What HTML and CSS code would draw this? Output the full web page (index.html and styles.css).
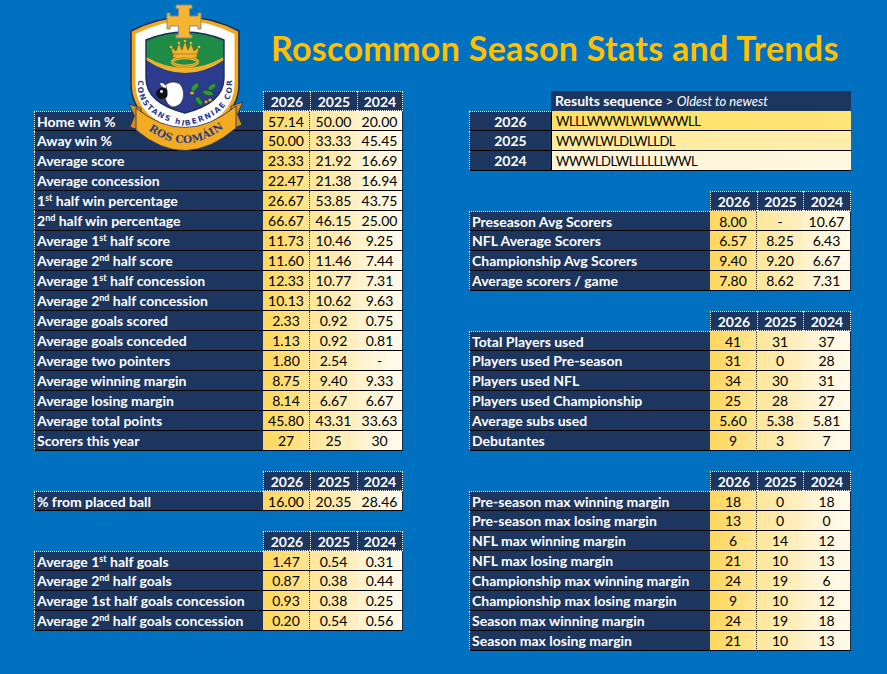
FILE: index.html
```html
<!DOCTYPE html>
<html lang="en">
<head>
<meta charset="utf-8">
<title>Roscommon Season Stats and Trends</title>
<link rel="stylesheet" href="styles.css">
</head>
<body>
<div class="sheet">
  <header class="title-bar">
    <h1>Roscommon Season Stats and Trends</h1>
  </header>

  <main class="columns">
    <section class="col">
      <div class="tbl stats-l">
        <div class="blank"></div><div class="hd">2026</div><div class="hd">2025</div><div class="hd last">2024</div>
        <div class="lab top">Home win %</div><div class="v v1 top">57.14</div><div class="v v2 top">50.00</div><div class="v v3 top">20.00</div>
        <div class="lab">Away win %</div><div class="v v1">50.00</div><div class="v v2">33.33</div><div class="v v3">45.45</div>
        <div class="lab">Average score</div><div class="v v1">23.33</div><div class="v v2">21.92</div><div class="v v3">16.69</div>
        <div class="lab">Average concession</div><div class="v v1">22.47</div><div class="v v2">21.38</div><div class="v v3">16.94</div>
        <div class="lab">1<sup>st</sup> half win percentage</div><div class="v v1">26.67</div><div class="v v2">53.85</div><div class="v v3">43.75</div>
        <div class="lab">2<sup>nd</sup> half win percentage</div><div class="v v1">66.67</div><div class="v v2">46.15</div><div class="v v3">25.00</div>
        <div class="lab">Average 1<sup>st</sup> half score</div><div class="v v1">11.73</div><div class="v v2">10.46</div><div class="v v3">9.25</div>
        <div class="lab">Average 2<sup>nd</sup> half score</div><div class="v v1">11.60</div><div class="v v2">11.46</div><div class="v v3">7.44</div>
        <div class="lab">Average 1<sup>st</sup> half concession</div><div class="v v1">12.33</div><div class="v v2">10.77</div><div class="v v3">7.31</div>
        <div class="lab">Average 2<sup>nd</sup> half concession</div><div class="v v1">10.13</div><div class="v v2">10.62</div><div class="v v3">9.63</div>
        <div class="lab">Average goals scored</div><div class="v v1">2.33</div><div class="v v2">0.92</div><div class="v v3">0.75</div>
        <div class="lab">Average goals conceded</div><div class="v v1">1.13</div><div class="v v2">0.92</div><div class="v v3">0.81</div>
        <div class="lab">Average two pointers</div><div class="v v1">1.80</div><div class="v v2">2.54</div><div class="v v3">-</div>
        <div class="lab">Average winning margin</div><div class="v v1">8.75</div><div class="v v2">9.40</div><div class="v v3">9.33</div>
        <div class="lab">Average losing margin</div><div class="v v1">8.14</div><div class="v v2">6.67</div><div class="v v3">6.67</div>
        <div class="lab">Average total points</div><div class="v v1">45.80</div><div class="v v2">43.31</div><div class="v v3">33.63</div>
        <div class="lab">Scorers this year</div><div class="v v1">27</div><div class="v v2">25</div><div class="v v3">30</div>
      </div>

      <div class="tbl stats-l">
        <div class="blank"></div><div class="hd">2026</div><div class="hd">2025</div><div class="hd last">2024</div>
        <div class="lab top">% from placed ball</div><div class="v v1 top">16.00</div><div class="v v2 top">20.35</div><div class="v v3 top">28.46</div>
      </div>

      <div class="tbl stats-l">
        <div class="blank"></div><div class="hd">2026</div><div class="hd">2025</div><div class="hd last">2024</div>
        <div class="lab top">Average 1<sup>st</sup> half goals</div><div class="v v1 top">1.47</div><div class="v v2 top">0.54</div><div class="v v3 top">0.31</div>
        <div class="lab">Average 2<sup>nd</sup> half goals</div><div class="v v1">0.87</div><div class="v v2">0.38</div><div class="v v3">0.44</div>
        <div class="lab">Average 1st half goals concession</div><div class="v v1">0.93</div><div class="v v2">0.38</div><div class="v v3">0.25</div>
        <div class="lab">Average 2<sup>nd</sup> half goals concession</div><div class="v v1">0.20</div><div class="v v2">0.54</div><div class="v v3">0.56</div>
      </div>
    </section>

    <section class="col">
      <div class="tbl seq">
        <div class="blank"></div><div class="seq-hd"><b>Results sequence</b> <span class="sub">&gt; <i>Oldest to newest</i></span></div>
        <div class="yr top">2026</div><div class="s s1">WLLLWWWLWLWWWLL</div>
        <div class="yr">2025</div><div class="s s2">WWWLWLDLWLLDL</div>
        <div class="yr">2024</div><div class="s s3">WWWLDLWLLLLLLWWL</div>
      </div>

      <div class="tbl stats-r">
        <div class="blank"></div><div class="hd">2026</div><div class="hd">2025</div><div class="hd last">2024</div>
        <div class="lab top">Preseason Avg Scorers</div><div class="v v1 top">8.00</div><div class="v v2 top">-</div><div class="v v3 top">10.67</div>
        <div class="lab">NFL Average Scorers</div><div class="v v1">6.57</div><div class="v v2">8.25</div><div class="v v3">6.43</div>
        <div class="lab">Championship Avg Scorers</div><div class="v v1">9.40</div><div class="v v2">9.20</div><div class="v v3">6.67</div>
        <div class="lab">Average scorers / game</div><div class="v v1">7.80</div><div class="v v2">8.62</div><div class="v v3">7.31</div>
      </div>

      <div class="tbl stats-r">
        <div class="blank"></div><div class="hd">2026</div><div class="hd">2025</div><div class="hd last">2024</div>
        <div class="lab top">Total Players used</div><div class="v v1 top">41</div><div class="v v2 top">31</div><div class="v v3 top">37</div>
        <div class="lab">Players used Pre-season</div><div class="v v1">31</div><div class="v v2">0</div><div class="v v3">28</div>
        <div class="lab">Players used NFL</div><div class="v v1">34</div><div class="v v2">30</div><div class="v v3">31</div>
        <div class="lab">Players used Championship</div><div class="v v1">25</div><div class="v v2">28</div><div class="v v3">27</div>
        <div class="lab">Average subs used</div><div class="v v1">5.60</div><div class="v v2">5.38</div><div class="v v3">5.81</div>
        <div class="lab">Debutantes</div><div class="v v1">9</div><div class="v v2">3</div><div class="v v3">7</div>
      </div>

      <div class="tbl stats-r">
        <div class="blank"></div><div class="hd">2026</div><div class="hd">2025</div><div class="hd last">2024</div>
        <div class="lab top">Pre-season max winning margin</div><div class="v v1 top">18</div><div class="v v2 top">0</div><div class="v v3 top">18</div>
        <div class="lab">Pre-season max losing margin</div><div class="v v1">13</div><div class="v v2">0</div><div class="v v3">0</div>
        <div class="lab">NFL max winning margin</div><div class="v v1">6</div><div class="v v2">14</div><div class="v v3">12</div>
        <div class="lab">NFL max losing margin</div><div class="v v1">21</div><div class="v v2">10</div><div class="v v3">13</div>
        <div class="lab">Championship max winning margin</div><div class="v v1">24</div><div class="v v2">19</div><div class="v v3">6</div>
        <div class="lab">Championship max losing margin</div><div class="v v1">9</div><div class="v v2">10</div><div class="v v3">12</div>
        <div class="lab">Season max winning margin</div><div class="v v1">24</div><div class="v v2">19</div><div class="v v3">18</div>
        <div class="lab">Season max losing margin</div><div class="v v1">21</div><div class="v v2">10</div><div class="v v3">13</div>
      </div>
    </section>
  </main>

  <svg class="crest" viewBox="0 0 116 152" width="116" height="152" aria-label="Roscommon GAA crest">
    <defs>
      <clipPath id="field">
        <path d="M18,40 Q57,24 96,40 L96,78 Q96,103 57,113 Q18,103 18,78 Z"/>
      </clipPath>
      <path id="motto" d="M9.5,60 L9.5,84 Q9.5,116 57,126 Q104.5,116 104.5,84 L104.5,60"/>
      <path id="banner" d="M12,123 Q57,164 104,121"/>
    </defs>
    <!-- shield -->
    <path d="M3,31 Q57,3 111,31 L111,84 Q111,122 57,136 Q3,122 3,84 Z" fill="#f2a91e" stroke="#1b2d5e" stroke-width="1.6"/>
    <path d="M7.5,34 Q57,8 106.5,34 L106.5,84 Q106.5,119 57,132 Q7.5,119 7.5,84 Z" fill="#ffffff"/>
    <path d="M18,40 Q57,24 96,40 L96,78 Q96,103 57,113 Q18,103 18,78 Z" fill="#2d3b8e"/>
    <g clip-path="url(#field)">
      <path d="M10,54 Q57,92 104,54 L104,20 L10,20 Z" fill="#f2b12a"/>
      <path d="M10,52 Q57,84 104,52 L104,20 L10,20 Z" fill="#1e8b47"/>
    </g>
    <path d="M18,40 Q57,24 96,40 L96,78 Q96,103 57,113 Q18,103 18,78 Z" fill="none" stroke="#1b2d5e" stroke-width="1.4"/>
    <!-- crown -->
    <path d="M45,57 L43,47 L48,51 L51,43 L54,50 L57,41 L60,50 L63,43 L66,51 L71,47 L69,57 Z" fill="#f4b52e" stroke="#6b5210" stroke-width="0.6"/>
    <circle cx="43" cy="47" r="1.3" fill="#f4b52e"/><circle cx="51" cy="43" r="1.3" fill="#f4b52e"/>
    <circle cx="57" cy="41" r="1.3" fill="#f4b52e"/><circle cx="63" cy="43" r="1.3" fill="#f4b52e"/>
    <circle cx="71" cy="47" r="1.3" fill="#f4b52e"/>
    <rect x="45" y="54" width="24" height="3.5" fill="#f4b52e" stroke="#6b5210" stroke-width="0.5"/>
    <ellipse cx="57" cy="62" rx="12.5" ry="4.2" fill="#1e8b47" stroke="#f4b52e" stroke-width="3"/>
    <ellipse cx="57" cy="62" rx="12.5" ry="4.2" fill="none" stroke="#6b5210" stroke-width="0.4"/>
    <!-- sheep -->
    <path d="M36,86 Q44,79 52,84 Q57,90 55,99 Q52,107 44,107 Q38,104 37,97 Z" fill="#ffffff" stroke="#1b1b1b" stroke-width="0.6"/>
    <path d="M38,87 Q32,87 28.5,91 Q27,96 31,98.5 Q35,100 39,97 Q40.5,92 38,87 Z" fill="#111111"/>
    <circle cx="33.5" cy="91.5" r="1.4" fill="#ffffff"/>
    <path d="M38.5,86.5 Q35,81 31.5,83.5 Q33.5,88 38.5,88.5 Z" fill="#ffffff" stroke="#1b1b1b" stroke-width="0.5"/>
    <!-- oak sprig -->
    <path d="M65,107 Q70,99 75,93 Q80,87 85,84" fill="none" stroke="#1d5a22" stroke-width="1.3"/>
    <ellipse cx="67" cy="87" rx="5" ry="2.6" transform="rotate(-50 67 87)" fill="#2f9a3c" stroke="#103d15" stroke-width="0.5"/>
    <ellipse cx="80" cy="93" rx="5.5" ry="2.5" transform="rotate(15 80 93)" fill="#2f9a3c" stroke="#103d15" stroke-width="0.5"/>
    <ellipse cx="84" cy="87" rx="4.5" ry="2.3" transform="rotate(-35 84 87)" fill="#2f9a3c" stroke="#103d15" stroke-width="0.5"/>
    <ellipse cx="71" cy="101" rx="5" ry="2.3" transform="rotate(55 71 101)" fill="#2f9a3c" stroke="#103d15" stroke-width="0.5"/>
    <ellipse cx="64" cy="93" rx="2" ry="1.6" fill="#f2b12a" stroke="#6b5210" stroke-width="0.3"/>
    <ellipse cx="82" cy="100" rx="1.8" ry="1.5" fill="#f2b12a" stroke="#6b5210" stroke-width="0.3"/>
    <ellipse cx="78" cy="102" rx="1.6" ry="1.4" fill="#f2b12a" stroke="#6b5210" stroke-width="0.3"/>
    <!-- motto -->
    <text class="motto"><textPath href="#motto" startOffset="50%" text-anchor="middle" textLength="146" lengthAdjust="spacing">CONSTANS hIBERNIAE COR</textPath></text>
    <!-- cross -->
    <path d="M48,5 H64 V8.5 H61.5 V16 H70 V13 H73 V29 H70 V26 H61.5 V35 H64 V38 H48 V35 H50.5 V26 H42 V29 H39 V13 H42 V16 H50.5 V8.5 H48 Z" fill="#f6b431" stroke="#8a8a8a" stroke-width="1"/>
    <!-- ribbon -->
    <path d="M1,104 L13,108 L13,131 L2,127 L6.5,116 Z" fill="#d58f14" stroke="#1b2d5e" stroke-width="0.8"/>
    <path d="M115,102 L103,106 L103,129 L114,125 L109.5,114 Z" fill="#d58f14" stroke="#1b2d5e" stroke-width="0.8"/>
    <path d="M8,108 Q57,148 108,106 L108,128 Q57,172 8,130 Z" fill="#f3ac22" stroke="#1b2d5e" stroke-width="0.8"/>
    <text class="banner"><textPath href="#banner" startOffset="50%" text-anchor="middle" textLength="82" lengthAdjust="spacing">ROS COMÁIN</textPath></text>
  </svg>
</div>
</body>
</html>
```

FILE: styles.css
```css
* {
  box-sizing: border-box;
}

html,
body {
  margin: 0;
}

body {
  background: #0070c0;
  font-family: Lato, "Noto Sans", sans-serif;
}

.sheet {
  position: relative;
  width: 887px;
  height: 674px;
  overflow: hidden;
}

.title-bar {
  height: 91px;
  padding: 31px 0 0 271px;
}

.title-bar h1 {
  margin: 0;
  font-size: 34px;
  line-height: 34px;
  letter-spacing: 0.3px;
  font-weight: 700;
  color: #ffc000;
  white-space: nowrap;
}

.columns {
  display: grid;
  grid-template-columns: 369px 382px;
  column-gap: 66px;
  padding-left: 34px;
  align-items: start;
}

.col {
  display: flex;
  flex-direction: column;
  gap: 20px;
}

.tbl {
  display: grid;
  grid-auto-rows: 20px;
  font-size: 14px;
}

.stats-l {
  grid-template-columns: 229px 47px 47px 46px;
}

.stats-r {
  grid-template-columns: 241px 47px 46px 48px;
}

.seq {
  grid-template-columns: 82px 300px;
}

.tbl > div {
  line-height: 16px;
  padding-top: 2px;
  white-space: nowrap;
}

.hd {
  background: #1c3660;
  color: #ffffff;
  font-weight: 700;
  text-align: center;
  border-top: 1px dotted #ffffff;
  border-bottom: 1px dotted #ffffff;
  border-left: 1px dotted #ffffff;
}

.hd.last {
  border-right: 1px dotted #ffffff;
}

.lab,
.yr {
  background: #1c3660;
  color: #ffffff;
  font-weight: 700;
  border-left: 1px dotted #ffffff;
  border-bottom: 1px solid #000000;
}

.lab {
  padding-left: 2px;
}

.yr {
  text-align: center;
}

.lab.top,
.yr.top {
  border-top: 1px dotted #ffffff;
}

.v.top {
  border-top: 1px solid transparent;
}

.lab sup {
  font-size: 9px;
  line-height: 0;
  vertical-align: 5px;
}

.v {
  color: #000000;
  text-align: center;
  border-bottom: 1px solid #000000;
}

.v1 {
  background: linear-gradient(90deg, #ffd75c, #ffe592);
  border-right: 1px dotted #3a3a3a;
}

.v2 {
  background: linear-gradient(90deg, #ffe699, #fff0c4);
}

.v3 {
  background: linear-gradient(90deg, #fff2cc, #fffbec);
  border-right: 1px solid #1a2a40;
}

.seq-hd {
  background: #1c3660;
  color: #ffffff;
  padding-left: 4px;
}

.seq-hd .sub {
  font-size: 13px;
}

.seq-hd i {
  font-style: italic;
}

.s {
  color: #000000;
  font-size: 13px;
  letter-spacing: -0.5px;
  padding-left: 4px;
  border-left: 1px solid #000000;
  border-bottom: 1px solid #000000;
}

.s1 {
  background: linear-gradient(90deg, #ffdf66, #ffe477);
}

.s2 {
  background: linear-gradient(90deg, #ffeb9c, #ffeeab);
}

.s3 {
  background: linear-gradient(90deg, #fff4d6, #fff7e0);
}

.crest {
  position: absolute;
  left: 128px;
  top: 0;
  z-index: 2;
}

.motto {
  font-family: "DejaVu Sans", sans-serif;
  font-size: 7.6px;
  font-weight: 700;
  fill: #2d3b8e;
}

.banner {
  font-family: "DejaVu Serif", serif;
  font-size: 10.5px;
  font-weight: 700;
  fill: #2d3b8e;
}
```
